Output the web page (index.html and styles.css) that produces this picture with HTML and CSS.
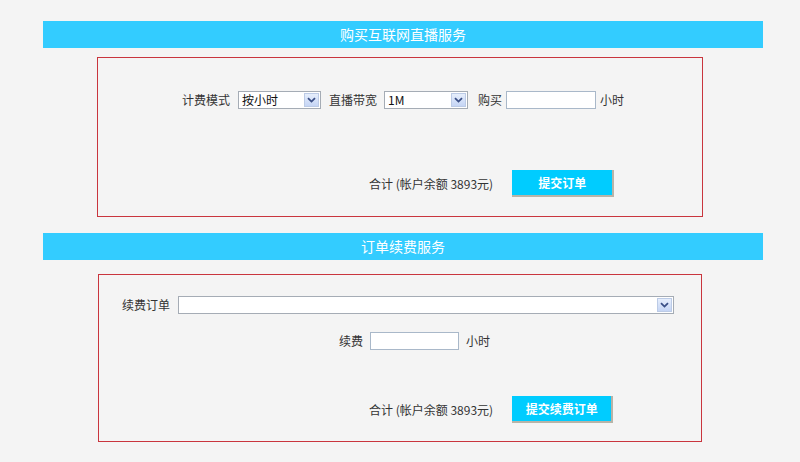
FILE: index.html
```html
<!DOCTYPE html>
<html lang="zh-CN">
<head>
<meta charset="utf-8">
<title>购买互联网直播服务</title>
<link rel="stylesheet" href="styles.css">
</head>
<body>
<div class="page">
  <div class="bar bar-first">购买互联网直播服务</div>
  <div class="box box-buy">
    <div class="row row-center">
      <span class="label">计费模式</span>
      <span class="select sel-mode"><span class="sel-text">按小时</span><span class="sel-btn"><svg width="9" height="6" viewBox="0 0 9 6"><path d="M1 1.2 L4.5 4.6 L8 1.2" fill="none" stroke="#3a4f86" stroke-width="1.8"/></svg></span></span>
      <span class="label lbl-bw">直播带宽</span>
      <span class="select sel-bw"><span class="sel-text">1M</span><span class="sel-btn"><svg width="9" height="6" viewBox="0 0 9 6"><path d="M1 1.2 L4.5 4.6 L8 1.2" fill="none" stroke="#3a4f86" stroke-width="1.8"/></svg></span></span>
      <span class="label lbl-buy">购买</span>
      <span class="input inp-buy"></span>
      <span class="label lbl-unit">小时</span>
    </div>
    <div class="row row-total">
      <span class="label">合计 (帐户余额 3893元)</span>
      <span class="btn">提交订单</span>
    </div>
  </div>

  <div class="bar bar-second">订单续费服务</div>
  <div class="box box-renew">
    <div class="row row-order">
      <span class="label">续费订单</span>
      <span class="select sel-order"><span class="sel-text"></span><span class="sel-btn"><svg width="9" height="6" viewBox="0 0 9 6"><path d="M1 1.2 L4.5 4.6 L8 1.2" fill="none" stroke="#3a4f86" stroke-width="1.8"/></svg></span></span>
    </div>
    <div class="row row-renew">
      <span class="label">续费</span>
      <span class="input inp-renew"></span>
      <span class="label lbl-unit2">小时</span>
    </div>
    <div class="row row-total2">
      <span class="label">合计 (帐户余额 3893元)</span>
      <span class="btn btn-wide">提交续费订单</span>
    </div>
  </div>
</div>
</body>
</html>
```
FILE: styles.css
```css
html, body {
  margin: 0;
  padding: 0;
}
body {
  background: #f4f4f4;
  font-family: "Noto Sans CJK SC", "Liberation Sans", sans-serif;
  font-size: 12px;
  color: #333;
  height: 462px;
  overflow: hidden;
}
.page {
  margin-left: 43px;
  width: 720px;
}
.bar {
  height: 27px;
  line-height: 27px;
  background: #33ccff;
  color: #fff;
  text-align: center;
  font-size: 14px;
}
.bar-first { margin-top: 21px; }
.bar-second { margin-top: 16px; }
.box {
  border: 1px solid #c9353d;
  box-sizing: border-box;
}
.box-buy {
  margin-top: 9px;
  margin-left: 54px;
  width: 606px;
  height: 160px;
  padding-top: 33px;
}
.box-renew {
  margin-top: 14px;
  margin-left: 55px;
  width: 604px;
  height: 168px;
  padding-top: 21px;
}
.row {
  display: flex;
  align-items: center;
  height: 18px;
}
.row-center { padding-left: 84px; }
.label { line-height: 18px; white-space: nowrap; }
.select {
  display: flex;
  align-items: stretch;
  height: 18px;
  box-sizing: border-box;
  border: 1px solid #a5acb5;
  background: #fff;
  margin-left: 8px;
}
.sel-text {
  flex: 1;
  padding-left: 3px;
  line-height: 16px;
  color: #111;
}
.sel-btn {
  width: 15px;
  margin: 1px;
  box-sizing: border-box;
  border: 1px solid #bccbe6;
  background: linear-gradient(#e6eefc, #c5d5f5);
  display: flex;
  align-items: center;
  justify-content: center;
}
.sel-mode { width: 83px; }
.lbl-bw { margin-left: 8px; }
.sel-bw { width: 84px; margin-left: 7px; }
.lbl-buy { margin-left: 10px; }
.input {
  display: block;
  height: 18px;
  box-sizing: border-box;
  border: 1px solid #a9b8c9;
  background: #fff;
}
.inp-buy { width: 90px; margin-left: 4px; }
.lbl-unit { margin-left: 4px; }
.row-total {
  margin-top: 61px;
  height: 27px;
  padding-left: 271px;
}
.btn {
  display: block;
  width: 102px;
  height: 27px;
  line-height: 26px;
  box-sizing: border-box;
  background: #00ccff;
  color: #fff;
  font-weight: bold;
  text-align: center;
  border-right: 2px solid #b8b4a8;
  border-bottom: 2px solid #b8b4a8;
  margin-left: 19px;
}
.btn-wide { width: 101px; }
.row-order { padding-left: 23px; }
.sel-order { width: 496px; margin-left: 8px; }
.row-renew {
  margin-top: 18px;
  padding-left: 240px;
}
.inp-renew { width: 89px; margin-left: 7px; }
.lbl-unit2 { margin-left: 7px; }
.row-total2 {
  margin-top: 46px;
  height: 27px;
  padding-left: 270px;
}
```
